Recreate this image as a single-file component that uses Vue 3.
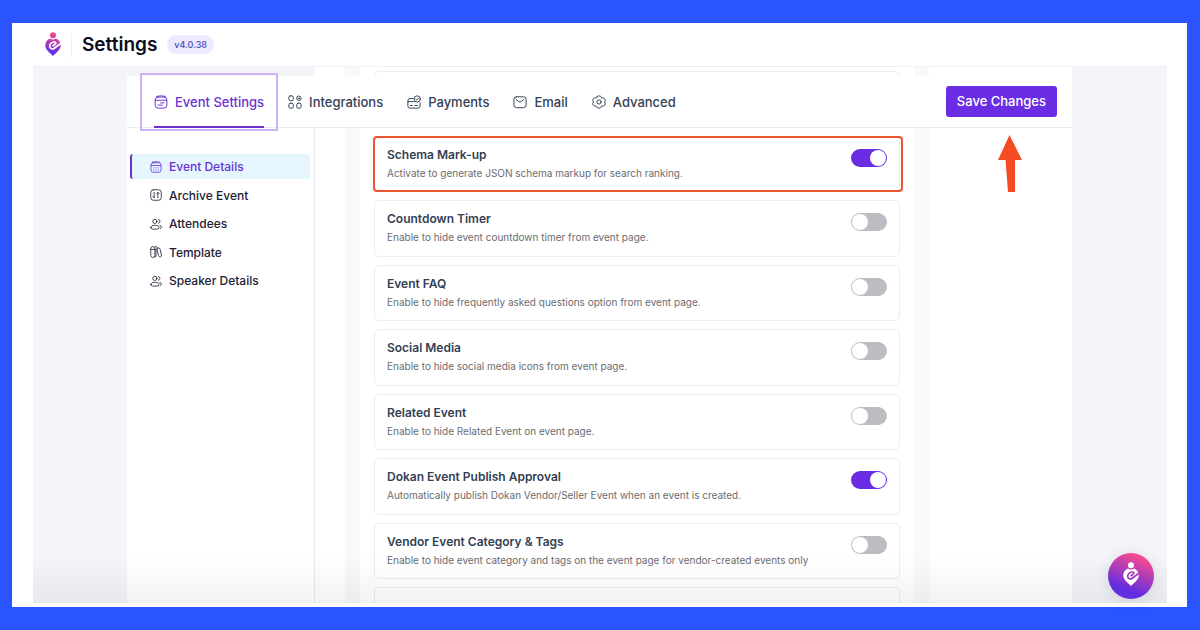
<script setup>
import { ref } from 'vue'

const tabs = [
  { name: 'Event Settings', icon: 'event', active: true },
  { name: 'Integrations', icon: 'grid' },
  { name: 'Payments', icon: 'pay' },
  { name: 'Email', icon: 'mail' },
  { name: 'Advanced', icon: 'gear' },
]
const sections = [
  { name: 'Event Details', icon: 'calendar', active: true },
  { name: 'Archive Event', icon: 'archive' },
  { name: 'Attendees', icon: 'people' },
  { name: 'Template', icon: 'template' },
  { name: 'Speaker Details', icon: 'people' },
]
const options = ref([
  { id: 'schema', title: 'Schema Mark-up', text: 'Activate to generate JSON schema markup for search ranking.', on: true, marked: true },
  { id: 'countdown', title: 'Countdown Timer', text: 'Enable to hide event countdown timer from event page.', on: false },
  { id: 'faq', title: 'Event FAQ', text: 'Enable to hide frequently asked questions option from event page.', on: false },
  { id: 'social', title: 'Social Media', text: 'Enable to hide social media icons from event page.', on: false },
  { id: 'related', title: 'Related Event', text: 'Enable to hide Related Event on event page.', on: false },
  { id: 'dokan', title: 'Dokan Event Publish Approval', text: 'Automatically publish Dokan Vendor/Seller Event when an event is created.', on: true },
  { id: 'vendor', title: 'Vendor Event Category & Tags', text: 'Enable to hide event category and tags on the event page for vendor-created events only', on: false },
])
</script>

<template>
  <div class="frame">
    <svg class="defs" width="0" height="0" aria-hidden="true">
      <defs>
        <linearGradient id="brand" gradientUnits="userSpaceOnUse" x1="11" y1="0" x2="6" y2="24">
          <stop offset="0.1" stop-color="#f4488f" />
          <stop offset="0.9" stop-color="#5f2ded" />
        </linearGradient>
        <mask id="e-cut" maskUnits="userSpaceOnUse" x="0" y="0" width="16" height="24">
          <rect width="16" height="24" fill="#fff" />
          <path d="M16.500 10.800 9.300 16.200C6.900 17.900 4.500 16.400 4.700 13.900 4.900 11.200 8 9.400 10.200 10.200 11.600 10.900 10.400 12.300 8 13.800" fill="none" stroke="#000" stroke-width="1.700" stroke-linecap="round" />
        </mask>
        <symbol id="pin" viewBox="0 0 16 24">
          <circle cx="8" cy="3.200" r="3" />
          <path mask="url(#e-cut)" d="M5 6.500Q8 8.600 11 6.500 15.700 8.500 15.700 13.500C15.700 17.500 12 20 8 24 4 20 .3 17.500.3 13.500Q.3 8.500 5 6.500Z" />
        </symbol>
        <symbol id="event" viewBox="0 0 16 16">
          <rect x="1.300" y="2.300" width="13.400" height="12.700" rx="3.500" />
          <path d="M3 1.500Q8 .4 13 1.500M1.500 6h13M7.500 9h4M4.500 11.500h5" />
        </symbol>
        <symbol id="grid" viewBox="0 0 16 16">
          <rect x="1" y="1" width="5" height="5.500" rx="1.500" />
          <rect x="1" y="9.500" width="5" height="5.500" rx="1.500" />
          <rect x="10" y="9.500" width="5" height="5.500" rx="1.500" />
          <path d="m12.500 1.200 2.300 1.300v2.600l-2.300 1.300-2.300-1.300V2.500Z" />
          <circle cx="12.500" cy="3.800" r=".5" />
        </symbol>
        <symbol id="pay" viewBox="0 0 16 16">
          <path d="M7 4H3.500Q1 4 1 6.500v6Q1 15 3.500 15h9q2.500 0 2.500-2.500V9M1 7.500h7M4 12h2M9 12h3" />
          <circle cx="11.700" cy="4.500" r="3.600" />
          <path d="m10 4.700 1.200 1.100 2.200-2.300" />
        </symbol>
        <symbol id="mail" viewBox="0 0 16 16">
          <rect x="1" y="2" width="14" height="12.500" rx="3" />
          <path d="m3.500 5 3.300 2.600q1.200.9 2.400 0L12.500 5" />
        </symbol>
        <symbol id="gear" viewBox="0 0 16 16">
          <path d="M6 1.500Q8 .3 10 1.500L11 3.200l2 .2Q15 4 15.300 6L14.300 8l1 2Q15 12 13 12.600l-2 .2-1 1.700Q8 15.700 6 14.500L5 12.800l-2-.2Q1 12 .7 10l1-2-1-2Q1 4 3 3.400l2-.2Z" />
          <circle cx="8" cy="8" r="2.400" />
        </symbol>
        <symbol id="calendar" viewBox="0 0 16 16">
          <rect x="1.300" y="2.300" width="13.400" height="12.700" rx="3" />
          <path d="M3 1.500Q8 .4 13 1.500M1.500 6h13M5 9h.3M8 9h.3M11 9h.3M5 12h.3M8 12h.3M11 12h.3" />
        </symbol>
        <symbol id="archive" viewBox="0 0 16 16">
          <rect x="1" y="1" width="14" height="14" rx="3.500" />
          <path d="M5.500 4.500v7M3.800 9.800l1.700 1.700M10.500 11.500v-7M8.800 6.200l1.700-1.700 1.700 1.700" />
        </symbol>
        <symbol id="people" viewBox="0 0 16 16">
          <circle cx="6.500" cy="4.500" r="2.800" />
          <path d="M1 12.500Q1 9.700 6.500 9.700t5.500 2.800Q12 14.800 9.500 14.800h-6Q1 14.800 1 12.500ZM11.300 2q2 .5 2 2.500t-2 2.500M13.300 10q2.200.8 2 2.400-.2 1.300-1.300 1.600" />
        </symbol>
        <symbol id="template" viewBox="0 0 16 16">
          <path d="M1 3q0-2 2-2h1.500q2 0 2 2v10q0 2-2 2H3q-2 0-2-2ZM1 4.500h5.500M6.500 1h2q1.500 0 1.500 2M6.500 4.500h2M8 6v7q0 2-1.500 2" />
          <path d="m9.500 3.500 2.500-1 1.300 1 2 8.500q.3 2-1.300 2.500-2 .5-2.500-1.200Z" />
        </symbol>
      </defs>
    </svg>

    <div class="panel">
      <header class="top">
        <svg class="logo" viewBox="0 0 16 24" fill="url(#brand)" aria-label="Logo"><use href="#pin" width="16" height="24" /></svg>
        <h1>Settings</h1>
        <span class="version">v4.0.38</span>
      </header>

      <div class="body">
        <div class="page">
          <div class="columns peek">
            <div class="peek-side"></div>
            <div class="main"><div class="lane"><div class="peek-card"></div></div></div>
          </div>

          <div class="bar">
            <nav class="tabs">
              <a v-for="t in tabs" :key="t.name" href="#" class="tab" :class="{ active: t.active }">
                <svg class="icon"><use :href="'#' + t.icon" /></svg>{{ t.name }}
              </a>
            </nav>
            <button class="save" type="button">Save Changes</button>
            <svg class="arrow" viewBox="0 0 24 58" aria-hidden="true"><path d="M11.500 0 24 25h-7v32h-7L7.500 25H0Z" /></svg>
          </div>

          <div class="columns content">
            <aside class="side">
              <nav class="sections">
                <a v-for="s in sections" :key="s.name" href="#" class="section" :class="{ active: s.active }">
                  <svg class="icon"><use :href="'#' + s.icon" /></svg>{{ s.name }}
                </a>
              </nav>
            </aside>
            <main class="main">
              <div class="lane">
                <div class="cards">
                  <div v-for="o in options" :key="o.id" class="card" :class="{ marked: o.marked }">
                    <div class="copy">
                      <label :for="o.id">{{ o.title }}</label>
                      <p>{{ o.text }}</p>
                    </div>
                    <input :id="o.id" v-model="o.on" class="switch" type="checkbox" role="switch" />
                  </div>
                </div>
                <div class="next-card"></div>
              </div>
            </main>
          </div>
        </div>
        <div class="fade"></div>
        <button class="fab" type="button" aria-label="Open help">
          <svg viewBox="0 0 16 24" fill="#fff"><use href="#pin" width="16" height="24" /></svg>
        </button>
      </div>
    </div>
  </div>
</template>

<style>
body { margin: 0; }
</style>

<style scoped>
* { box-sizing: border-box; }
.frame {
  display: flex;
  height: 100vh;
  padding: 23px 13px 23px 12px;
  background: #2954ff;
  font-family: Inter, "Liberation Sans", sans-serif;
  color: #1e2233;
}
.defs { position: absolute; }
a { color: inherit; text-decoration: none; }
.panel {
  flex: 1;
  display: flex;
  flex-direction: column;
  padding: 0 20px 4px 21px;
  background: #fff;
}
.top { display: flex; align-items: center; height: 43px; padding-left: 12px; }
.logo { width: 16px; height: 24px; margin-bottom: 2px; }
h1 {
  margin: 0 10px;
  padding-left: 10px;
  border-left: 1px solid #f1f1f5;
  font-size: 19px;
  line-height: 24px;
  font-weight: 600;
  color: #0b0c1c;
}
.version {
  padding: 0 7px;
  border-radius: 10px;
  background: #eee9fe;
  color: #4345b5;
  font-size: 9px;
  line-height: 19px;
  font-weight: 500;
}
.body {
  position: relative;
  flex: 1;
  min-height: 0;
  padding: 0 95px 0 94px;
  background: #f3f5f9;
  border-top: 1px solid #eff1f4;
}
.page { display: flex; flex-direction: column; height: 100%; }
.columns { display: grid; grid-template-columns: 188px 1fr; }
.peek { height: 9px; }
.main {
  display: flex;
  flex-direction: column;
  min-height: 0;
  padding: 0 143px 0 30px;
  background: #fff;
}
.lane {
  flex: 1;
  display: flex;
  flex-direction: column;
  min-height: 0;
  padding: 0 14px;
  border: solid #f7f9fa;
  border-width: 0 15px;
}
.peek-card { height: 5px; margin-top: 4px; border: 1px solid #ededf0; border-bottom: 0; border-radius: 5px 5px 0 0; }
.bar {
  position: relative;
  display: flex;
  justify-content: space-between;
  align-items: center;
  height: 52px;
  padding: 0 15px 0 27px;
  background: #fff;
  border-bottom: 1px solid #ebebee;
}
.tabs { display: flex; gap: 24px; height: 52px; }
.tab {
  position: relative;
  display: flex;
  align-items: center;
  gap: 7px;
  font-size: 13px;
  font-weight: 500;
  color: #334155;
  white-space: nowrap;
}
.icon { width: 14px; height: 14px; fill: none; stroke: currentColor; stroke-width: 1.1; stroke-linecap: round; stroke-linejoin: round; }
.tab.active { color: #6a32d1; border-bottom: 2px solid #6a32d1; border-top: 2px solid transparent; }
.tab.active::after {
  content: "";
  position: absolute;
  inset: -5px -14px;
  border: 2px solid #ceb0f5;
}
.save {
  height: 31px;
  padding: 0 11px;
  border: 0;
  border-radius: 3px;
  background: #6a2de3;
  color: #fff;
  font: 500 13px/31px Inter, sans-serif;
}
.arrow { position: absolute; top: 59px; right: 50px; width: 24px; height: 58px; fill: #f44b23; z-index: 1; }
.content { flex: 1; min-height: 0; }
.side {
  padding: 26px 4px 0 3px;
  background: #fff;
  border-right: 1px solid #e9eaed;
}
.sections { display: flex; flex-direction: column; justify-content: space-between; min-height: 139px; }
.section {
  display: flex;
  align-items: center;
  gap: 7px;
  height: 25px;
  padding-left: 18px;
  border-left: 2px solid transparent;
  border-radius: 3px;
  font-size: 12px;
  font-weight: 500;
}
.section .icon { width: 12px; height: 12px; }
.section.active { background: #e6f6ff; color: #6a32d1; border-color: #6a32d1; }
.content .lane { padding-top: 8px; gap: 8px; }
.cards { flex: 1; display: flex; flex-direction: column; gap: 8px; min-height: 0; }
.card {
  position: relative;
  flex: 1;
  display: flex;
  justify-content: space-between;
  align-items: flex-start;
  padding: 8px 12px;
  border: 1px solid #ededf0;
  border-radius: 5px;
}
.card.marked::after {
  content: "";
  position: absolute;
  inset: -1px -4px -1px -2px;
  border: 2px solid #ee5533;
  border-radius: 4px;
  pointer-events: none;
}
.copy label { display: block; font-size: 12px; line-height: 20px; font-weight: 600; color: #334155; }
.copy p { margin: 0; font-size: 10px; line-height: 17px; color: #6b6c70; }
.switch {
  appearance: none;
  flex: none;
  width: 36px;
  height: 18px;
  margin: 4px 0 0;
  padding: 1px;
  border-radius: 9px;
  background: #bdbcc2;
}
.switch::before {
  content: "";
  display: block;
  width: 16px;
  height: 16px;
  border-radius: 50%;
  background: #fff;
}
.switch:checked { background: #6a2de3; }
.switch:checked::before { margin-left: auto; }
.next-card { height: 16px; border: 1px solid #ededf0; border-bottom: 0; border-radius: 5px 5px 0 0; }
.fade {
  position: absolute;
  inset: auto 0 0;
  height: 48px;
  background: linear-gradient(rgb(0 0 0 / 0), rgb(0 0 0 / 0.05));
  pointer-events: none;
}
.fab {
  position: absolute;
  right: 13px;
  bottom: 4px;
  display: grid;
  place-items: center;
  width: 46px;
  height: 46px;
  padding: 0 0 4px;
  border: 0;
  border-radius: 50%;
  background: linear-gradient(200deg, #ff4c8b 10%, #632de0 75%);
  box-shadow: 0 2px 14px rgb(80 80 110 / 0.16);
}
.fab svg { width: 16px; height: 24px; }
</style>
